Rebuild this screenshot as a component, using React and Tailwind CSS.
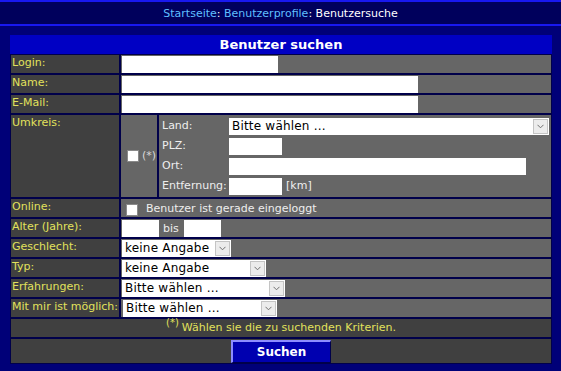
import React from 'react';

const Label = ({ children, className = '' }) => (
  <div className={`w-[108px] shrink-0 bg-[#404040] px-[1px] text-[11px] leading-[15px] text-[#e2e25c] whitespace-nowrap ${className}`}>
    {children}
  </div>
);

const Cell = ({ children, className = '' }) => (
  <div className={`flex-1 bg-[#666666] flex items-center ${className}`}>{children}</div>
);

const Input = ({ className = '' }) => <div className={`h-[17px] bg-white ${className}`} />;

const Checkbox = () => (
  <div className="w-[12px] h-[12px] bg-white border border-[#8a8a8a] shrink-0" />
);

// fake select box with the little grey arrow button on the right
const Select = ({ value, className = '' }) => (
  <div className={`h-[17px] bg-white flex items-center justify-between ${className}`}>
    <span className="pl-[3px] text-[12px] tracking-[0.2px] leading-none text-black whitespace-nowrap">{value}</span>
    <span className="w-[15px] h-[15px] mr-[1px] bg-[#ececec] border border-[#c4c4c4] flex items-center justify-center">
      <svg width="7" height="5" viewBox="0 0 7 5">
        <path d="M0.5 0.8 L3.5 3.8 L6.5 0.8" fill="none" stroke="#707070" strokeWidth="1" />
      </svg>
    </span>
  </div>
);

const Row = ({ label, children, cellClass = '' }) => (
  <div className="flex gap-[2px] h-[18px]">
    <Label>{label}</Label>
    <Cell className={cellClass}>{children}</Cell>
  </div>
);

export default function App() {
  return (
    <div className="w-[561px] h-[371px] bg-[#000078] font-['DejaVu_Sans',Verdana,sans-serif] overflow-hidden">
      {/* Breadcrumb bar */}
      <div className="h-[26px] border-y-2 border-[#1818f0] bg-[#00005c] flex items-center justify-center pt-[2px] text-[11px]">
        <span className="text-[#5fbfff]">Startseite</span>
        <span className="text-white">:&nbsp;</span>
        <span className="text-[#5fbfff]">Benutzerprofile</span>
        <span className="text-white">:&nbsp;Benutzersuche</span>
      </div>

      <div className="px-[10px] pt-[9px]">
        <div className="bg-[#00004a] px-[1px] pb-[1px] w-[542px]">
          {/* Header */}
          <div className="h-[19px] -mx-[1px] mb-[1px] bg-[#0000c4] flex items-center justify-center text-[13px] font-bold text-white">
            Benutzer suchen
          </div>

          <div className="flex flex-col gap-[2px]">
            <Row label="Login:">
              <Input className="w-[156px] ml-[1px]" />
            </Row>
            <Row label="Name:">
              <Input className="w-[296px] ml-[1px]" />
            </Row>
            <Row label="E-Mail:">
              <Input className="w-[296px] ml-[1px]" />
            </Row>

            {/* Umkreis */}
            <div className="flex gap-[2px] h-[82px]">
              <Label>Umkreis:</Label>
              <div className="w-[36px] shrink-0 bg-[#666666] flex items-center pl-[6px] gap-[3px]">
                <Checkbox />
                <span className="text-[11px] text-[#d8d8d8]">(*)</span>
              </div>
              <div className="flex-1 bg-[#666666] pt-[1px] pl-[3px] flex flex-col">
                <div className="flex items-center h-[20px]">
                  <span className="w-[67px] text-[11px] text-[#eeeeee]">Land:</span>
                  <Select value="Bitte wählen ..." className="w-[320px]" />
                </div>
                <div className="flex items-center h-[20px]">
                  <span className="w-[67px] text-[11px] text-[#eeeeee]">PLZ:</span>
                  <Input className="w-[53px]" />
                </div>
                <div className="flex items-center h-[20px]">
                  <span className="w-[67px] text-[11px] text-[#eeeeee]">Ort:</span>
                  <Input className="w-[297px]" />
                </div>
                <div className="flex items-center h-[20px]">
                  <span className="w-[67px] text-[11px] text-[#eeeeee]">Entfernung:</span>
                  <Input className="w-[53px]" />
                  <span className="ml-[4px] text-[11px] text-[#eeeeee]">[km]</span>
                </div>
              </div>
            </div>

            <Row label="Online:" cellClass="pt-[3px]">
              <div className="ml-[5px] flex items-center gap-[8px]">
                <Checkbox />
                <span className="text-[11px] text-[#eeeeee]">Benutzer ist gerade eingeloggt</span>
              </div>
            </Row>
            <Row label="Alter (Jahre):">
              <Input className="w-[37px] ml-[1px]" />
              <span className="mx-[4px] pt-[2px] text-[11px] text-[#eeeeee] w-[17px]">bis</span>
              <Input className="w-[37px]" />
            </Row>
            <Row label="Geschlecht:">
              <Select value="keine Angabe" className="w-[109px] ml-[1px]" />
            </Row>
            <Row label="Typ:">
              <Select value="keine Angabe" className="w-[144px] ml-[1px]" />
            </Row>
            <Row label="Erfahrungen:">
              <Select value="Bitte wählen ..." className="w-[163px] ml-[1px]" />
            </Row>
            <Row label="Mit mir ist möglich:">
              <Select value="Bitte wählen ..." className="w-[154px] ml-[2px]" />
            </Row>

            {/* footnote */}
            <div className="h-[18px] bg-[#404040] flex items-center justify-center text-[11px] text-[#e2e25c]">
              <sup className="text-[10px] mr-[3px]">(*)</sup>
              Wählen sie die zu suchenden Kriterien.
            </div>

            {/* submit */}
            <div className="h-[24px] bg-[#404040] flex items-center justify-center">
              <div className="w-[100px] h-[23px] mt-[1px] bg-[#0000b0] border-t-2 border-l-2 border-t-[#8c8cff] border-l-[#8c8cff] border-r border-b border-[#00004a] flex items-center justify-center text-[12px] font-bold text-white">
                Suchen
              </div>
            </div>
          </div>
        </div>
      </div>
    </div>
  );
}
